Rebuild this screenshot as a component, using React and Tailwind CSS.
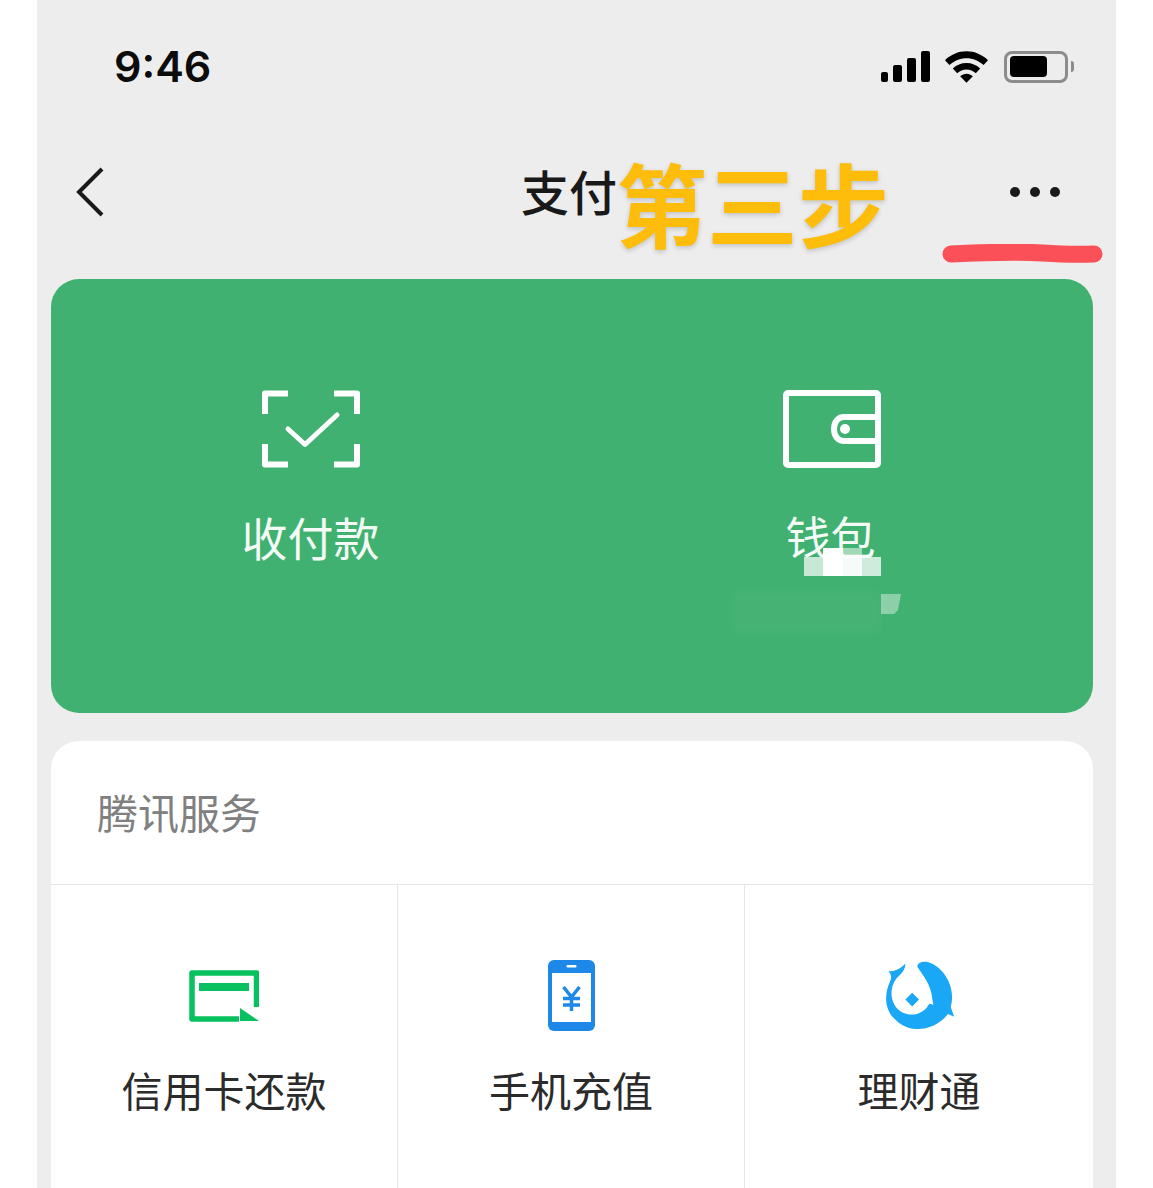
import React from 'react';

const cjk = 'font-["Noto_Sans_CJK_SC","Noto_Sans",sans-serif]';

const ScanIcon = () => (
  <svg width="98" height="78" viewBox="0 0 98 78" fill="none" stroke="#fff" strokeWidth="6" strokeLinejoin="round">
    <path d="M3 24V3.500H26" />
    <path d="M72 3.500H95V24" />
    <path d="M3 54V74.500H26" />
    <path d="M72 74.500H95V54" />
    <path d="M26 39L43 54.500L75 25" strokeWidth="5" strokeLinecap="round" />
  </svg>
);

const WalletIcon = () => (
  <svg width="98" height="78" viewBox="0 0 98 78" fill="none" stroke="#fff" strokeWidth="6" strokeLinejoin="round">
    <rect x="3" y="3" width="92" height="72" rx="2" />
    <path d="M94 27H61C55 27 51 32 51 39C51 46 55 51 61 51H94" />
    <circle cx="62" cy="39" r="5" fill="#fff" stroke="none" />
  </svg>
);

const CardIcon = () => (
  <svg width="70" height="52" viewBox="0 0 70 52" fill="none">
    <path d="M67.500 37V3H3V49H50" stroke="#07c160" strokeWidth="5.500" strokeLinejoin="round" />
    <rect x="10" y="13" width="50" height="8" fill="#07c160" />
    <path d="M51 38L70 51H51Z" fill="#07c160" />
  </svg>
);

const PhoneIcon = () => (
  <svg width="47" height="71" viewBox="0 0 47 71" fill="none">
    <rect x="0" y="0" width="47" height="71" rx="6" fill="#1e88e9" />
    <rect x="4" y="13" width="39" height="49" fill="#fff" />
    <rect x="18.500" y="5" width="10" height="2.500" rx="1" fill="#fff" />
    <path d="M15.500 27L23.500 37L31.500 27M15 38.500H32M15 45H32M23.500 37V51" stroke="#1e88e9" strokeWidth="3.500" />
  </svg>
);

const FishIcon = () => (
  <svg width="72" height="71" viewBox="60 52 210 208">
    <path
      fill="#1aa7f5"
      d="M125 62C110 78 95 85 75 85C85 95 85 105 80 115C60 160 65 205 105 235C150 270 215 255 250 210L268 218L258 190C275 130 235 70 190 58C175 55 160 60 160 72C175 95 200 125 203 160L207 183L195 180C180 210 145 220 115 205C80 185 75 135 100 105C115 90 125 80 125 62Z"
    />
    <path fill="#1aa7f5" d="M145 148L165 168L145 188L125 168Z" />
  </svg>
);

const WifiIcon = () => (
  <svg width="43" height="32" viewBox="0 0 44 32" fill="#000">
    <path d="M22 0C13.500 0 6 3.500 0 9L4.500 14C9.500 9.500 15.500 7 22 7C28.500 7 34.500 9.500 39.500 14L44 9C38 3.500 30.500 0 22 0Z" />
    <path d="M22 12C16.500 12 12 14 8 17.500L12.500 22.500C15 20 18.500 18.500 22 18.500C25.500 18.500 29 20 31.500 22.500L36 17.500C32 14 27.500 12 22 12Z" />
    <path d="M22 23C19.500 23 17.500 24 15.500 25.500L22 32L28.500 25.500C26.500 24 24.500 23 22 23Z" />
  </svg>
);

const services = [
  { name: '信用卡还款', icon: <CardIcon /> },
  { name: '手机充值', icon: <PhoneIcon /> },
  { name: '理财通', icon: <FishIcon /> },
];

export default function App() {
  return (
    <div className={`h-[1188px] w-[1153px] overflow-hidden bg-white ${cjk}`}>
      <div className="relative ml-[37px] h-[1188px] w-[1079px] overflow-visible bg-[#ededee]">
        {/* status bar */}
        <div className="flex h-[134px] items-center pb-[1px] pl-[77px] pr-[42px]">
          <span className='font-["Inter",sans-serif] text-[43px] font-semibold leading-none text-[#0c0c0c]'>9:46</span>
          <div className="ml-auto flex items-center">
            <div className="flex items-end gap-[5px]">
              <div className="h-[10px] w-[7px] rounded-[2px] bg-black" />
              <div className="h-[17px] w-[9px] rounded-[2px] bg-black" />
              <div className="h-[24px] w-[9px] rounded-[2px] bg-black" />
              <div className="h-[31px] w-[9px] rounded-[2px] bg-black" />
            </div>
            <div className="ml-[15px]">
              <WifiIcon />
            </div>
            <div className="ml-[16px] flex h-[32px] w-[64px] items-center rounded-[8px] border-[3px] border-[#8c8c8c] pl-[3px]">
              <div className="h-[21px] w-[37px] rounded-[4px] bg-black" />
            </div>
            <div className="ml-[3px] h-[11px] w-[3px] rounded-r-full bg-[#8c8c8c]" />
          </div>
        </div>

        {/* nav */}
        <div className="mb-[29px] flex h-[116px] items-center">
          <svg className="ml-[39px]" width="28" height="50" viewBox="0 0 28 50" fill="none">
            <path d="M26 2L3 25L26 48" stroke="#1a1a1a" strokeWidth="4" />
          </svg>
          <span className="mb-[4px] ml-[417px] text-[48px] font-medium leading-none text-[#191919]">支付</span>
          <div className="ml-auto mr-[56px] flex gap-[10px]">
            <div className="h-[10px] w-[10px] rounded-full bg-[#1a1a1a]" />
            <div className="h-[10px] w-[10px] rounded-full bg-[#1a1a1a]" />
            <div className="h-[10px] w-[10px] rounded-full bg-[#1a1a1a]" />
          </div>
        </div>

        {/* green panel */}
        <div className="relative ml-[14px] grid h-[434px] w-[1042px] grid-cols-2 rounded-[28px] bg-[#40b171]">
          <div className="flex flex-col items-center pr-[2px] pt-[111px]">
            <ScanIcon />
            <div className="mt-[38px] text-[46px] leading-[60px] text-[#f4fbf7]">收付款</div>
          </div>
          <div className="flex flex-col items-center pr-[2px] pt-[111px]">
            <WalletIcon />
            <div className="mt-[38px] pr-[2px] text-[45px] leading-[60px] text-[#f4fbf7]">钱包</div>
          </div>
          {/* smudged balance and mosaic */}
          <div className="absolute left-[680px] top-[312px] h-[42px] w-[150px] bg-white/[0.03] blur-[4px]" />
          <svg className="absolute left-[753px] top-[269px]" width="97" height="66" viewBox="0 0 97 66">
            <rect x="0" y="9" width="19" height="19" fill="#fff" opacity="0.7" />
            <rect x="19" y="0" width="20" height="28" fill="#fff" />
            <rect x="39" y="0" width="19" height="9" fill="#fff" opacity="0.5" />
            <rect x="39" y="9" width="19" height="19" fill="#fff" opacity="0.95" />
            <rect x="58" y="9" width="19" height="19" fill="#fff" opacity="0.75" />
            <path d="M77 46H97L94 62L90 66H77Z" fill="#fff" opacity="0.4" />
          </svg>
        </div>

        {/* services */}
        <div className="ml-[14px] mt-[28px] w-[1042px] rounded-t-[28px] bg-white">
          <div className="flex h-[144px] items-center border-b border-[#e5e5e5] pb-[3px] pl-[46px] text-[41px] leading-none text-[#808080]">
            腾讯服务
          </div>
          <div className="grid grid-cols-[347px_347px_1fr]">
            {services.map((s) => (
              <div
                key={s.name}
                className="flex h-[310px] flex-col items-center border-r border-[#e5e5e5] last:border-r-0"
              >
                <div className="mt-[75px] flex h-[71px] items-center justify-center">{s.icon}</div>
                <div className="mt-[34px] text-[41px] leading-[48px] text-[#2b2b2b]">{s.name}</div>
              </div>
            ))}
          </div>
        </div>

        {/* annotations drawn over the screenshot */}
        <span className="absolute left-[579px] top-[143px] whitespace-nowrap text-[91px] font-bold leading-[116px] text-[#fdbd0a] [text-shadow:0_2px_5px_rgba(0,0,0,0.18)]">
          第三步
        </span>
        <svg className="absolute left-[905px] top-[244px]" width="161" height="19" viewBox="0 0 161 19" fill="none">
          <path d="M9 10Q70 7 100 9T152 10" stroke="#fb5058" strokeWidth="17" strokeLinecap="round" />
        </svg>
      </div>
    </div>
  );
}
